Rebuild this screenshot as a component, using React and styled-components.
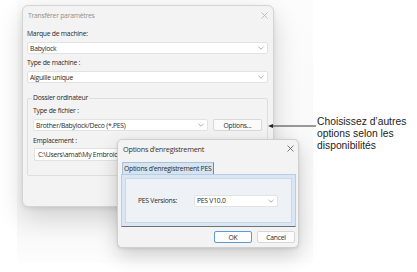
import React from 'react'
import styled, { createGlobalStyle } from 'styled-components'

const Global = createGlobalStyle`
  html, body { margin: 0; padding: 0; background: #fff; }
  body { width: 417px; height: 272px; overflow: hidden; }
`

const Chevron = () => (
  <svg width="6" height="4" viewBox="0 0 6 4">
    <polyline points="0.5,0.8 3,3.2 5.5,0.8" fill="none" stroke="#9a9a9a" strokeWidth="0.8" />
  </svg>
)

const Close = ({ light }) => (
  <svg width="7" height="7" viewBox="0 0 7 7">
    <path d="M0.5 0.5 L6.5 6.5 M6.5 0.5 L0.5 6.5" stroke={light ? '#b0b0b0' : '#555'} strokeWidth="0.8" />
  </svg>
)

function Combo({ value, width }) {
  return (
    <ComboBox $width={width}>
      <span>{value}</span>
      <Chevron />
    </ComboBox>
  )
}

export default function App() {
  return (
    <Page>
      <Global />
      <Desktop>
        <MainDialog>
          <TitleBar>
            <Title $muted>Transférer paramètres</Title>
            <Close light />
          </TitleBar>
          <Body>
            <Label>Marque de machine:</Label>
            <Combo value="Babylock" />
            <Label $top={4}>Type de machine :</Label>
            <Combo value="Aiguille unique" />
            <Group>
              <Legend>Dossier ordinateur</Legend>
              <Label>Type de fichier :</Label>
              <FileRow>
                <Combo value="Brother/Babylock/Deco (*.PES)" width={175} />
                <Button>Options...</Button>
              </FileRow>
              <Label $top={5}>Emplacement :</Label>
              <PathField>C:\Users\amat\My Embroideries</PathField>
            </Group>
          </Body>
        </MainDialog>

        <OptionsDialog>
          <TitleBar $dark>
            <Title>Options d’enregistrement</Title>
            <Close />
          </TitleBar>
          <TabStrip>
            <Tab>Options d’enregistrement PES</Tab>
          </TabStrip>
          <Panel>
            <PanelInner>
              <FieldLabel>PES Versions:</FieldLabel>
              <Combo value="PES V10.0" width={84} />
            </PanelInner>
          </Panel>
          <Buttons>
            <DlgButton $focus>OK</DlgButton>
            <DlgButton>Cancel</DlgButton>
          </Buttons>
        </OptionsDialog>
      </Desktop>

      <Callout>
        <svg width="48" height="6" viewBox="0 0 48 6">
          <line x1="3" y1="3" x2="48" y2="3" stroke="#222" strokeWidth="0.9" />
          <polygon points="0,3 5,1 5,5" fill="#222" />
        </svg>
        <Note>
          Choisissez d’autres<br />options selon les<br />disponibilités
        </Note>
      </Callout>
    </Page>
  )
}

const Page = styled.div`
  position: relative;
  width: 417px;
  height: 272px;
  font-family: "Open Sans", "Noto Sans", sans-serif;
  font-size: 6.8px;
  letter-spacing: -0.25px;
  color: #2a2a2a;
`

const Desktop = styled.div`
  position: absolute;
  left: 17px;
  top: 0;
  width: 296px;
  height: 263px;
  background: linear-gradient(to bottom, #fcfcfc 0%, #f7f7f7 85%, #fdfdfd 100%);
`

const MainDialog = styled.div`
  position: absolute;
  left: 5px;
  top: 5px;
  width: 250px;
  height: 200px;
  background: #f3f3f3;
  border: 1px solid #d4d4d4;
  border-radius: 6px;
  box-shadow: 0 10px 26px rgba(0, 0, 0, 0.16), 0 2px 4px rgba(0, 0, 0, 0.08);
`

const OptionsDialog = styled.div`
  position: absolute;
  left: 100px;
  top: 139px;
  width: 180px;
  height: 107px;
  background: #f3f3f3;
  border: 1px solid #cfcfcf;
  border-radius: 5px;
  box-shadow: 0 8px 20px rgba(0, 0, 0, 0.18), 0 1px 3px rgba(0, 0, 0, 0.1);
`

const TitleBar = styled.div`
  height: ${p => (p.$dark ? '17px' : '18px')};
  display: flex;
  align-items: center;
  justify-content: space-between;
  padding: 0 ${p => (p.$dark ? '4px' : '5px')} 0 5px;
`

const Title = styled.div`
  font-size: ${p => (p.$muted ? '6.8px' : '7.3px')};
  color: ${p => (p.$muted ? '#8f8f8f' : '#333')};
`

const Body = styled.div`
  padding: 0 5px 0 4px;
`

const Label = styled.div`
  height: 10px;
  line-height: 10px;
  margin-top: ${p => p.$top || 5}px;
  margin-bottom: 3px;
  white-space: nowrap;
`

const ComboBox = styled.div`
  box-sizing: border-box;
  width: ${p => (p.$width ? `${p.$width}px` : '100%')};
  height: 12px;
  display: flex;
  align-items: center;
  justify-content: space-between;
  padding: 0 3px 0 2px;
  background: #fff;
  border: 1px solid #e2e2e2;
  border-radius: 2px;
  white-space: nowrap;
  flex-shrink: 0;
`

const Group = styled.div`
  position: relative;
  margin-top: 15px;
  height: 74px;
  padding: 2px 5px 0 5px;
  border: 1px solid #dedede;
  border-radius: 2px;
`

const Legend = styled.span`
  position: absolute;
  left: 4px;
  top: -6px;
  padding: 0 1px;
  line-height: 10px;
  background: #f3f3f3;
`

const FileRow = styled.div`
  display: flex;
  gap: 5px;
`

const Button = styled.div`
  box-sizing: border-box;
  width: 49px;
  height: 12px;
  display: flex;
  align-items: center;
  justify-content: center;
  background: #fbfbfb;
  border: 1px solid #d8d8d8;
  border-radius: 2px;
`

const PathField = styled.div`
  box-sizing: border-box;
  margin-top: -1px;
  margin-left: 1px;
  height: 13px;
  line-height: 11px;
  padding: 0 3px;
  background: #fff;
  border: 1px solid #e2e2e2;
  white-space: nowrap;
  overflow: hidden;
`

const TabStrip = styled.div`
  display: flex;
  padding: 5px 0 0 4px;
`

const Tab = styled.div`
  box-sizing: border-box;
  width: 92px;
  height: 12px;
  line-height: 11px;
  padding-left: 1px;
  background: #d6e4f2;
  border: 1px solid #a9c2dc;
  border-right: 1px solid #7d8791;
  border-bottom: none;
  white-space: nowrap;
  overflow: hidden;
`

const Panel = styled.div`
  box-sizing: border-box;
  margin-left: 3px;
  width: 175px;
  height: 53px;
  padding: 3px;
  background: #d9e6f3;
  border: 1px solid #b8cde3;
  border-bottom: 1px solid #6f7379;
`

const PanelInner = styled.div`
  height: 100%;
  display: flex;
  align-items: center;
  background: #eef1f5;
  border: 1px solid #c9d7e6;
  box-sizing: border-box;
`

const FieldLabel = styled.div`
  width: 56px;
  padding-left: 12px;
  white-space: nowrap;
`

const Buttons = styled.div`
  display: flex;
  justify-content: flex-end;
  gap: 5px;
  padding: 4px 3px 0 0;
`

const DlgButton = styled.div`
  box-sizing: border-box;
  width: 38px;
  height: 12px;
  display: flex;
  align-items: center;
  justify-content: center;
  background: #fdfdfd;
  border: 1px solid ${p => (p.$focus ? '#5a9bd8' : '#d6d6d6')};
  border-radius: 2px;
`

const Callout = styled.div`
  position: absolute;
  left: 268px;
  top: 116px;
  display: flex;
  align-items: flex-start;
  gap: 1px;
  svg { margin-top: 7px; }
`

const Note = styled.div`
  font-family: "Liberation Sans", Arial, sans-serif;
  font-size: 10.3px;
  letter-spacing: 0;
  line-height: 12px;
  color: #222;
`
